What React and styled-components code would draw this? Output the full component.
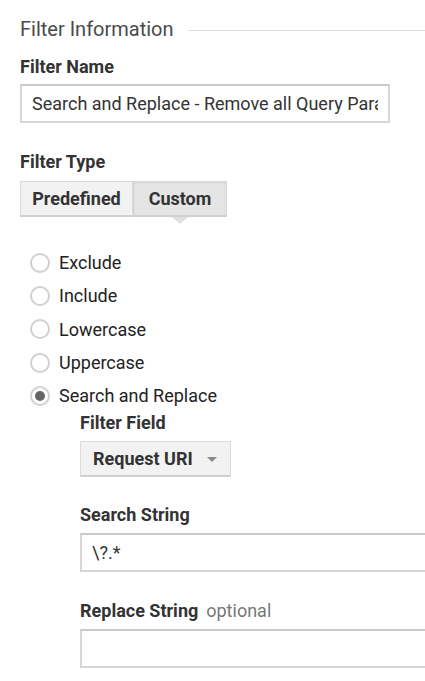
import React from "react";
import styled, { createGlobalStyle } from "styled-components";

const Global = createGlobalStyle`
  html, body { margin: 0; padding: 0; background: #fff; }
  body { font-family: Roboto, "Noto Sans", Arial, sans-serif; color: #333; }
`;

const Page = styled.div`
  width: 425px;
  height: 681px;
  overflow: hidden;
  padding: 17px 0 0 20px;
  box-sizing: border-box;
`;

const SectionHeader = styled.div`
  display: flex;
  align-items: center;
  gap: 14px;
  height: 24px;
  font-size: 20px;
  color: #4a4a4a;
`;

const Rule = styled.div`
  flex: 1;
  border-top: 1px solid #ddd;
  margin-top: 2px;
`;

const Label = styled.div`
  font-size: 18px;
  font-weight: 700;
  color: #333;
  line-height: 22px;
  margin-top: ${(p) => p.$top || 0}px;
  display: flex;
  align-items: baseline;
  gap: 8px;
`;

const Optional = styled.span`
  font-weight: 400;
  color: #777;
`;

const TextBox = styled.div`
  box-sizing: border-box;
  width: ${(p) => p.$width};
  height: 39px;
  margin-top: ${(p) => p.$top || 7}px;
  border: 2px solid #d6d6d6;
  border-top-color: #c9c9c9;
  background: #fff;
  padding: 0 10px;
  display: flex;
  align-items: center;
  flex-shrink: 0;
`;

const TextValue = styled.span`
  flex: 1;
  min-width: 0;
  overflow: hidden;
  white-space: nowrap;
  font-size: 18px;
  color: #333;
`;

const SegGroup = styled.div`
  display: flex;
  margin-top: 8px;
  height: 36px;
`;

const SegButton = styled.div`
  position: relative;
  box-sizing: border-box;
  width: ${(p) => p.$w}px;
  height: 36px;
  display: flex;
  align-items: center;
  justify-content: center;
  font-size: 18px;
  font-weight: 700;
  color: #333;
  background: ${(p) => (p.$active ? "#e5e5e5" : "#f2f2f2")};
  border: 1px solid #dadada;
  border-bottom: 2px solid #d0d0d0;
  ${(p) => p.$active && "box-shadow: inset 0 1px 2px rgba(0,0,0,0.08);"}
  & + & { border-left: 1px solid #d2d2d2; }
`;

const Caret = styled.div`
  position: absolute;
  left: 50%;
  bottom: -9px;
  transform: translateX(-50%);
  width: 0;
  height: 0;
  border-left: 8px solid transparent;
  border-right: 8px solid transparent;
  border-top: 7px solid #e0e0e0;
`;

const RadioList = styled.div`
  display: flex;
  flex-direction: column;
  margin-top: 29px;
  margin-left: 10px;
`;

const RadioRow = styled.div`
  display: flex;
  align-items: center;
  gap: 9px;
  height: ${(p) => p.$h || 33.3}px;
  font-size: 18px;
  color: #222;
`;

const RadioCircle = styled.span`
  box-sizing: border-box;
  width: 20px;
  height: 20px;
  border-radius: 50%;
  border: 2px solid #d0d0d0;
  background: #fff;
  display: flex;
  align-items: center;
  justify-content: center;
  flex-shrink: 0;
  &::after {
    content: "";
    width: 10px;
    height: 10px;
    border-radius: 50%;
    background: ${(p) => (p.$checked ? "#666" : "transparent")};
  }
`;

const SubSection = styled.div`
  margin-left: 60px;
  display: flex;
  flex-direction: column;
`;

const DropButton = styled.div`
  box-sizing: border-box;
  width: 151px;
  height: 36px;
  margin-top: 7px;
  display: flex;
  align-items: center;
  justify-content: space-between;
  padding: 0 13px 0 12px;
  background: #f2f2f2;
  border: 1px solid #dadada;
  border-bottom: 2px solid #d0d0d0;
  font-size: 18px;
  font-weight: 700;
  color: #333;
`;

const DownArrow = styled.span`
  width: 0;
  height: 0;
  border-left: 5px solid transparent;
  border-right: 5px solid transparent;
  border-top: 5px solid #8a8a8a;
  margin-top: 2px;
`;

const radios = ["Exclude", "Include", "Lowercase", "Uppercase"];

export default function App() {
  return (
    <>
      <Global />
      <Page>
        <SectionHeader>
          Filter Information
          <Rule />
        </SectionHeader>
        <Label $top={15}>Filter Name</Label>
        <TextBox $width="370px" $top={6}>
          <TextValue>Search and Replace - Remove all Query Parameters</TextValue>
        </TextBox>
        <Label $top={28}>Filter Type</Label>
        <SegGroup>
          <SegButton $w={113}>Predefined</SegButton>
          <SegButton $w={94} $active>
            Custom
            <Caret />
          </SegButton>
        </SegGroup>
        <RadioList>
          {radios.map((r) => (
            <RadioRow key={r}>
              <RadioCircle />
              {r}
            </RadioRow>
          ))}
          <RadioRow $h={33}>
            <RadioCircle $checked />
            Search and Replace
          </RadioRow>
        </RadioList>
        <SubSection>
          <Label $top={0}>Filter Field</Label>
          <DropButton>
            Request URI
            <DownArrow />
          </DropButton>
          <Label $top={27}>Search String</Label>
          <TextBox $width="360px" $top={7}>
            <TextValue>\?.*</TextValue>
          </TextBox>
          <Label $top={28}>
            Replace String<Optional>optional</Optional>
          </Label>
          <TextBox $width="360px" $top={7}>
            <TextValue />
          </TextBox>
        </SubSection>
      </Page>
    </>
  );
}
